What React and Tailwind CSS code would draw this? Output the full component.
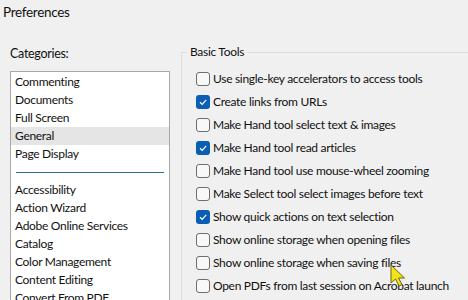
const CATEGORIES_TOP = ['Commenting', 'Documents', 'Full Screen', 'General', 'Page Display'];
const CATEGORIES_BOTTOM = [
  'Accessibility',
  'Action Wizard',
  'Adobe Online Services',
  'Catalog',
  'Color Management',
  'Content Editing',
  'Convert From PDF',
];

const OPTIONS = [
  { label: 'Use single-key accelerators to access tools', checked: false },
  { label: 'Create links from URLs', checked: true },
  { label: 'Make Hand tool select text & images', checked: false },
  { label: 'Make Hand tool read articles', checked: true },
  { label: 'Make Hand tool use mouse-wheel zooming', checked: false },
  { label: 'Make Select tool select images before text', checked: false },
  { label: 'Show quick actions on text selection', checked: true },
  { label: 'Show online storage when opening files', checked: false },
  { label: 'Show online storage when saving files', checked: false },
  { label: 'Open PDFs from last session on Acrobat launch', checked: false },
];

export default function App() {
  return (
    <div className="relative h-[300px] w-[468px] overflow-hidden bg-[#f0f0f0] text-[#111] tracking-[-0.3px] [font-family:Lato,'Open_Sans',sans-serif]">
      {/* ── Title ─────────────────────────────────────────────── */}
      <div className="h-6 pl-[3px] text-[13.5px] leading-6">Preferences</div>

      <div className="flex pt-[21px]">
        {/* ── Categories ──────────────────────────────────────── */}
        <div className="w-[181px] shrink-0 pl-[10px]">
          <div className="pt-[1px] text-[12.5px] leading-[16px]">Categories:</div>
          <div className="mt-[9px] h-[240px] w-[160px] border border-[#a8a8a8] bg-white pt-[1px]">
            {CATEGORIES_TOP.map((c) => (
              <Item key={c} label={c} selected={c === 'General'} />
            ))}
            <div className="mx-[5px] mt-[9px] mb-[8px] h-px bg-[#2f6f8f]" />
            {CATEGORIES_BOTTOM.map((c) => (
              <Item key={c} label={c} />
            ))}
          </div>
        </div>

        {/* ── Basic Tools ─────────────────────────────────────── */}
        <fieldset className="-mt-[1px] h-[260px] flex-1 border-l border-t border-[#dcdcdc] pl-[14px]">
          <legend className="-ml-[9px] px-[3px] text-[12px] leading-[16px]">Basic Tools</legend>
          <div className="mt-[7px] flex flex-col">
            {OPTIONS.map((o) => (
              <Option key={o.label} {...o} />
            ))}
          </div>
        </fieldset>
      </div>

      {/* ── Mouse pointer ───────────────────────────────────── */}
      <svg className="absolute left-[390px] top-[264px]" width="20" height="24" viewBox="0 0 20 24">
        <path d="M1 1 L1 19 L5.5 15 L9 22 L12 20.5 L8.5 14 L14.5 14 Z" fill="#f4e21a" stroke="#6b6410" strokeWidth="1" strokeLinejoin="round" />
      </svg>
    </div>
  );
}

function Item({ label, selected = false }) {
  return (
    <div className={`h-[18px] pl-[4px] text-[12px] leading-[18px] ${selected ? 'bg-[#e5e5e5]' : ''}`}>
      {label}
    </div>
  );
}

function Option({ label, checked }) {
  return (
    <div className="flex h-[23px] items-center gap-[3px] whitespace-nowrap text-[12px]">
      {checked ? (
        <span className="flex h-[14px] w-[14px] shrink-0 items-center justify-center rounded-[3px] bg-[#0a5fb4]">
          <svg width="10" height="10" viewBox="0 0 10 10">
            <path d="M2 5.2 L4.2 7.3 L8.2 2.8" fill="none" stroke="white" strokeWidth="1.2" />
          </svg>
        </span>
      ) : (
        <span className="h-[14px] w-[14px] shrink-0 rounded-[3px] border border-[#6e6e6e] bg-[#f8f8f8]" />
      )}
      <span>{label}</span>
    </div>
  );
}
